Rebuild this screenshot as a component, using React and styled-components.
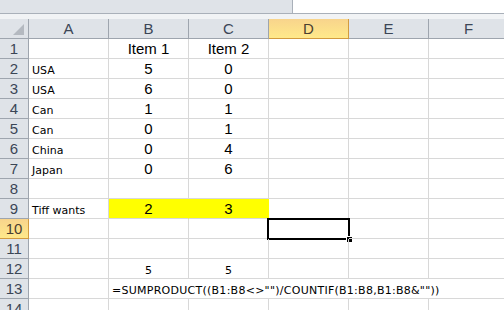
import React from "react";
import styled, { createGlobalStyle, css } from "styled-components";

const GlobalStyle = createGlobalStyle`
  html, body {
    margin: 0;
    padding: 0;
    background: #ffffff;
  }
`;

const Sheet = styled.div`
  width: 504px;
  height: 310px;
  overflow: hidden;
  background: #ffffff;
`;

const TopStrip = styled.div`
  display: grid;
  grid-template-columns: 293px 1fr;
  height: 13px;
  border-bottom: 1px solid #a9b0b9;

  .left {
    background: #dfe3e8;
    border-right: 1px solid #a9b0b9;
  }
  .right {
    background: #ffffff;
  }
`;

const Gap = styled.div`
  height: 5px;
  background: #f1f3f5;
`;

const Grid = styled.div`
  display: grid;
  grid-template-columns: 29px repeat(6, 80px);
  grid-auto-rows: 20px;
  width: 509px;
`;

const HeadCell = styled.div`
  box-sizing: border-box;
  display: flex;
  align-items: center;
  justify-content: center;
  font-family: "Liberation Sans", Arial, sans-serif;
  font-size: 15px;
  color: #3b4656;
  background: #dfe3e8;
  border-right: 1px solid #9ea5ae;
  border-bottom: 1px solid #9ea5ae;

  ${(p) =>
    p.$active &&
    css`
      background: linear-gradient(#f8d48c, #ffe98a);
      border-color: #d29b3f;
      color: #4a4030;
    `}
`;

const Corner = styled(HeadCell)`
  align-items: flex-end;
  justify-content: flex-end;
  padding: 0 4px 3px 0;
`;

const Cell = styled.div`
  box-sizing: border-box;
  position: relative;
  display: flex;
  align-items: flex-end;
  justify-content: ${(p) => (p.$align === "left" ? "flex-start" : "center")};
  padding: 0 3px 1px;
  white-space: nowrap;
  color: #000000;
  border-right: 1px solid #d8d8d8;
  border-bottom: 1px solid #d8d8d8;
  font-family: ${(p) =>
    p.$size === "big"
      ? `"Liberation Sans", Arial, sans-serif`
      : `"DejaVu Sans", Tahoma, sans-serif`};
  font-size: ${(p) => (p.$size === "big" ? "15px" : "11px")};
  letter-spacing: ${(p) => (p.$formula ? "0.26px" : "normal")};
  grid-column: span ${(p) => p.$span || 1};

  ${(p) =>
    p.$fill &&
    css`
      background: ${p.$fill};
      border-right-color: ${p.$fill};
    `}
`;

const Selection = styled.div`
  position: absolute;
  top: -1px;
  left: -2px;
  right: -2px;
  bottom: -2px;
  border: 2px solid #000000;
  pointer-events: none;

  &::after {
    content: "";
    position: absolute;
    right: -4px;
    bottom: -4px;
    width: 5px;
    height: 5px;
    background: #000000;
    border: 1px solid #ffffff;
    border-right: none;
    border-bottom: none;
  }
`;

const columns = ["A", "B", "C", "D", "E", "F"];

// each row: [A, B, C] plus options
const rows = [
  { cells: ["", "Item 1", "Item 2"], size: "big" },
  { cells: ["USA", "5", "0"], size: "big" },
  { cells: ["USA", "6", "0"], size: "big" },
  { cells: ["Can", "1", "1"], size: "big" },
  { cells: ["Can", "0", "1"], size: "big" },
  { cells: ["China", "0", "4"], size: "big" },
  { cells: ["Japan", "0", "6"], size: "big" },
  { cells: ["", "", ""] },
  { cells: ["Tiff wants", "2", "3"], size: "big", fill: "#ffff00" },
  { cells: ["", "", ""] },
  { cells: ["", "", ""] },
  { cells: ["", "5", "5"], size: "small" },
  { formula: '=SUMPRODUCT((B1:B8<>"")/COUNTIF(B1:B8,B1:B8&""))' },
  { cells: ["", "", ""] },
];

const activeRow = 10;
const activeCol = "D";

const CornerMark = () => (
  <svg width="11" height="11" viewBox="0 0 11 11">
    <polygon points="11,0 11,11 0,11" fill="#b4b9c0" />
  </svg>
);

const App = () => {
  return (
    <Sheet>
      <GlobalStyle />
      <TopStrip>
        <div className="left" />
        <div className="right" />
      </TopStrip>
      <Gap />
      <Grid>
        <Corner>
          <CornerMark />
        </Corner>
        {columns.map((c) => (
          <HeadCell key={c} $active={c === activeCol}>
            {c}
          </HeadCell>
        ))}

        {rows.map((row, i) => {
          const n = i + 1;
          return (
            <React.Fragment key={n}>
              <HeadCell $active={n === activeRow}>{n}</HeadCell>
              {row.formula ? (
                <>
                  <Cell $align="left" />
                  <Cell $align="left" $span={5} $formula>
                    {row.formula}
                  </Cell>
                </>
              ) : (
                <>
                  <Cell $align="left">{row.cells[0]}</Cell>
                  <Cell $size={row.size} $fill={row.fill}>
                    {row.cells[1]}
                  </Cell>
                  <Cell $size={row.size} $fill={row.fill}>
                    {row.cells[2]}
                  </Cell>
                  <Cell>
                    {n === activeRow && <Selection />}
                  </Cell>
                  <Cell />
                  <Cell />
                </>
              )}
            </React.Fragment>
          );
        })}
      </Grid>
    </Sheet>
  );
};

export default App;
